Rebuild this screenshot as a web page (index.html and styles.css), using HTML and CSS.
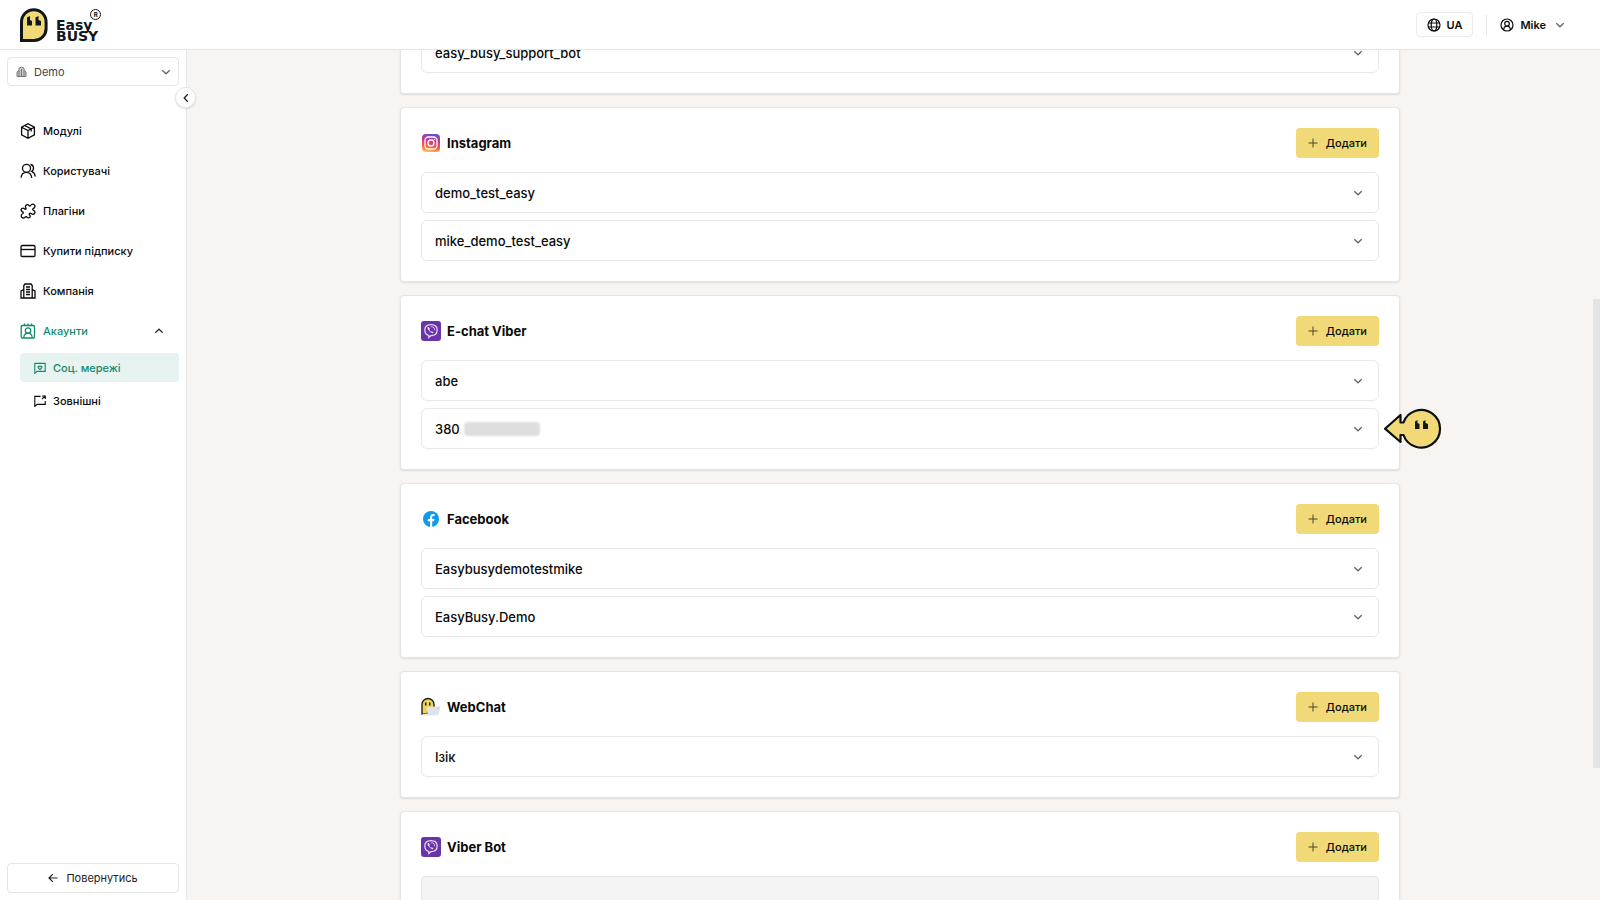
FILE: index.html
```html
<!DOCTYPE html>
<html lang="uk">
<head>
<meta charset="utf-8">
<title>Easy BUSY</title>
<link rel="stylesheet" href="styles.css">
</head>
<body>
<svg class="defs" aria-hidden="true">
  <symbol id="chevron" viewBox="0 0 10 10"><path d="M1.3 3.2 5 6.8 8.7 3.2" fill="none" stroke="currentColor" stroke-width="1.3"/></symbol>
  <symbol id="plus" viewBox="0 0 10 10"><path d="M5 .5v9M.5 5h9" fill="none" stroke="currentColor" stroke-width="1"/></symbol>
  <symbol id="viber" viewBox="0 0 20 20">
    <rect width="20" height="20" rx="3" fill="#6a34a8"/>
    <path d="M10 3.6c4 0 6.200 1 6.200 5.400s-2 5.600-6.200 5.600l-2.200 2v-2.200C5 13.800 3.800 12.400 3.800 9 3.800 4.600 6 3.600 10 3.600Z" fill="none" stroke="#eadcf8" stroke-width="1.200"/>
    <path d="M7 6c-.8.600-.4 1.900.4 3.100.9 1.400 2 2.400 3.400 3 .9.300 1.500-.3 1.600-.9l-1.500-1-.8.600C9.200 10.300 8.700 9.700 8.300 8.700l.7-.7-1-1.700c-.2-.3-.6-.5-1-.3Z" fill="#eadcf8"/>
    <path d="M10.200 5.700c2.200 0 3.500 1.300 3.500 3.500" fill="none" stroke="#eadcf8" stroke-width=".9"/>
  </symbol>
</svg>

<header class="topbar">
  <a class="logo" href="#" aria-label="Easy BUSY">
    <svg class="logo-mark" viewBox="0 0 28 34"><path d="M1.500 32.500V14a12.300 12.300 0 0 1 24.600 0v6.500a12 12 0 0 1-12 12Z" fill="#f0d976" stroke="#11181b" stroke-width="3"/><path d="M7 9.500 10 8v4l2 1v4.500H7ZM15.500 9.500l3-1.500v4l2.500 1v4.500h-5.500Z" fill="#11181b"/></svg>
    <span class="logo-text"><span>Easy</span><span>BUSY</span></span>
    <span class="logo-reg">R</span>
  </a>
  <div class="topbar-tools">
    <button class="lang" type="button">
      <svg class="icon-sm" viewBox="0 0 14 14" fill="none" stroke="currentColor" stroke-width="1.200"><circle cx="7" cy="7" r="6"/><ellipse cx="7" cy="7" rx="2.800" ry="6"/><path d="M1.500 5h11M1.500 9h11"/></svg>
      UA
    </button>
    <button class="user" type="button">
      <svg class="icon-sm" viewBox="0 0 14 14" fill="none" stroke="currentColor" stroke-width="1.200"><circle cx="7" cy="7" r="6"/><circle cx="7" cy="5.700" r="2.300"/><path d="M3.600 11.800c.2-2.500 1.200-3.700 3.400-3.700s3.200 1.200 3.400 3.700"/></svg>
      Mike
      <svg class="chev"><use href="#chevron"/></svg>
    </button>
  </div>
</header>

<div class="body">
  <aside class="sidebar">
    <div class="company">
      <svg class="company-icon" viewBox="0 0 11 12"><path d="M3 10.500V2.200L5.500 1 8 2.200v8.300ZM3 4.500 1 6v4.500h2M8 4.500 10 6v4.500H8M5.500 3v7" fill="#ccc" stroke="#777" stroke-width="1"/></svg>
      <select class="company-select" aria-label="Компанія"><option>Demo</option></select>
      <svg class="chev company-chev"><use href="#chevron"/></svg>
    </div>
    <button class="collapse" type="button" aria-label="Згорнути"><svg class="chev turn-left"><use href="#chevron"/></svg></button>

    <nav class="nav">
      <a class="nav-item" href="#"><svg class="icon" viewBox="0 0 16 16"><path d="m8 .8 6.400 3.400v7.600L8 15.200l-6.400-3.400V4.200ZM1.600 4.200 8 7.600l6.400-3.400M8 7.600v7.600M4.800 2.500l6.400 3.400v2.600"/></svg>Модулі</a>
      <a class="nav-item" href="#"><svg class="icon" viewBox="0 0 16 16"><circle cx="6.500" cy="5.300" r="4"/><path d="M1 14.800c.3-3.600 2.200-5.500 5.500-5.500s4.800 1.900 5.300 5.500M10.500 1.500c3.500.3 4 5.300 1.200 6.800 2.200 1 3.300 2.700 3.500 5.200"/></svg>Користувачі</a>
      <a class="nav-item" href="#"><svg class="icon" viewBox="0 0 16 16"><path d="M5.500 4.200C5 2 7.600.8 8.900 2.400 9.500 3.300 10.300 3.200 10.800 2.300 11.700.6 14 .8 14.700 2.200 15.300 3.600 14.600 5 13.300 5.500 12.500 6 12.600 6.900 13.400 7.300 15.800 8.300 15.300 11.300 12.800 11.400 11.600 11.500 10.900 9.800 9.800 10.300 8.800 10.800 9.300 11.800 10 12.500 10.900 14.300 8.800 15.600 7.300 14.500 6.500 13.500 5.700 13.400 5 14.300 3.600 15.600 1.500 15 1.200 13.200 1.100 11.600 2 10.900 2.900 10.500 3.600 9.900 3.300 9.300 2.600 8.800.3 7.800.8 5.300 2.800 5.100 4.200 5 4.700 6.700 5.800 6.200 6.600 5.700 5.900 5 5.500 4.200Z"/></svg>Плагіни</a>
      <a class="nav-item" href="#"><svg class="icon" viewBox="0 0 16 16"><rect x="1" y="2.500" width="14" height="11" rx="1.200"/><path d="M1 6.500h14"/></svg>Купити підписку</a>
      <a class="nav-item" href="#"><svg class="icon" viewBox="0 0 16 16"><path d="M3.800 15V2.500L5 1h6l1.200 1.500V15M3.800 6.500 1 8v7h14V8l-2.800-1.500M6 4h4M6 6.500h4M6 9h4M6 11.500h4"/></svg>Компанія</a>
      <a class="nav-item active" href="#"><svg class="icon" viewBox="0 0 16 16"><rect x="1.200" y="2.500" width="13.300" height="12.500" rx="1"/><path d="M4.500.5v2M8 .5v2M11.500.5v2"/><circle cx="8" cy="7.500" r="2.700"/><path d="M3.800 14.500c.3-3 1.700-4.300 4.200-4.300s3.900 1.300 4.200 4.300"/></svg>Акаунти<svg class="chev turn-up"><use href="#chevron"/></svg></a>
      <a class="sub-item current" href="#"><svg class="icon-xs" viewBox="0 0 12 12"><path d="M.8 11.400V1.400h10.400v8H3Z"/><path d="M6 7.600 4.200 5.700c-.7-1.300 1-2.200 1.800-1 .8-1.200 2.500-.3 1.800 1Z"/></svg>Соц. мережі</a>
      <a class="sub-item" href="#"><svg class="icon-xs" viewBox="0 0 12 12"><path d="M6.500 1.400H.8v10L3 9.400h8.200V6M8 1h3.300v3M11 1.200 8 4.200"/></svg>Зовнішні</a>
    </nav>

    <button class="back" type="button"><svg class="arrow" viewBox="0 0 10 10" fill="none" stroke="currentColor" stroke-width="1.200"><path d="M9.500 5H1M4.800 1.200 1 5l3.800 3.800"/></svg>Повернутись</button>
  </aside>

  <main class="content">
    <div class="cards">
      <section class="card card-clipped">
        <ul class="rows">
          <li><button class="row" type="button">easy_busy_support_bot<svg class="chev"><use href="#chevron"/></svg></button></li>
        </ul>
      </section>

      <section class="card">
        <div class="card-head">
          <svg class="brand" viewBox="0 0 20 20">
            <defs><linearGradient id="ig" x1=".3" y1="1" x2=".5" y2="0"><stop offset="0" stop-color="#ffc24a"/><stop offset=".3" stop-color="#f9623e"/><stop offset=".65" stop-color="#d6308e"/><stop offset="1" stop-color="#6a4fd4"/></linearGradient></defs>
            <rect x="1" y="1" width="18" height="18" rx="4" fill="url(#ig)"/><rect x="4" y="4" width="12" height="12" rx="3.500" fill="none" stroke="#fff" stroke-width="1.300"/><circle cx="10" cy="10" r="3" fill="none" stroke="#fff" stroke-width="1.300"/><circle cx="13.500" cy="6.500" r=".8" fill="#fff"/></svg>
          <h2>Instagram</h2>
          <button class="add" type="button"><svg class="plus"><use href="#plus"/></svg>Додати</button>
        </div>
        <ul class="rows">
          <li><button class="row" type="button">demo_test_easy<svg class="chev"><use href="#chevron"/></svg></button></li>
          <li><button class="row" type="button">mike_demo_test_easy<svg class="chev"><use href="#chevron"/></svg></button></li>
        </ul>
      </section>

      <section class="card">
        <div class="card-head">
          <svg class="brand"><use href="#viber"/></svg>
          <h2>E-chat Viber</h2>
          <button class="add" type="button"><svg class="plus"><use href="#plus"/></svg>Додати</button>
        </div>
        <ul class="rows">
          <li><button class="row" type="button">abe<svg class="chev"><use href="#chevron"/></svg></button></li>
          <li class="pointed"><button class="row" type="button">380<span class="redacted"></span><svg class="chev"><use href="#chevron"/></svg></button>
            <svg class="pointer" viewBox="0 0 58 42"><path d="M1 20.700 16.500 7v7.500h3a18.800 18.800 0 1 1 0 12.500h-3v7Z" fill="#f0d976" stroke="#0b0f10" stroke-width="2.200" stroke-linejoin="round"/><path d="M31 13.500 33.500 12v3l2 1v5H31ZM39 13.500l2.500-1.500v3l2.500 1v5h-5Z" fill="#11181b"/></svg>
          </li>
        </ul>
      </section>

      <section class="card">
        <div class="card-head">
          <svg class="brand" viewBox="0 0 20 20"><circle cx="10" cy="10" r="8" fill="#0c9bec"/><path d="M9 18v-5.700H6.800V10H9V8.300C9 6 10.200 4.900 12.200 4.900l1.400.1v2h-1c-1 0-1.400.5-1.400 1.300V10h2.300l-.4 2.300h-1.900V18Z" fill="#fff"/></svg>
          <h2>Facebook</h2>
          <button class="add" type="button"><svg class="plus"><use href="#plus"/></svg>Додати</button>
        </div>
        <ul class="rows">
          <li><button class="row" type="button">Easybusydemotestmike<svg class="chev"><use href="#chevron"/></svg></button></li>
          <li><button class="row" type="button">EasyBusy.Demo<svg class="chev"><use href="#chevron"/></svg></button></li>
        </ul>
      </section>

      <section class="card">
        <div class="card-head">
          <svg class="brand" viewBox="0 0 20 20"><path d="M1 17V7.500a6 6 0 0 1 12 0V17Z" fill="#f0d35c" stroke="#1d2224" stroke-width="1.400"/><path d="M4 5.500h1.500v3H4ZM8 5.500h1.500v3H8Z" fill="#1d2224"/><path d="m5.500 10 14-.8-2 9H2l-.8-1.500h5.500Z" fill="#dfe3ee"/><circle cx="6" cy="15.500" r="1" fill="#c9b45c"/><circle cx="17" cy="11.200" r=".8" fill="#d9c45c"/></svg>
          <h2>WebChat</h2>
          <button class="add" type="button"><svg class="plus"><use href="#plus"/></svg>Додати</button>
        </div>
        <ul class="rows">
          <li><button class="row" type="button">Ізік<svg class="chev"><use href="#chevron"/></svg></button></li>
        </ul>
      </section>

      <section class="card">
        <div class="card-head">
          <svg class="brand"><use href="#viber"/></svg>
          <h2>Viber Bot</h2>
          <button class="add" type="button"><svg class="plus"><use href="#plus"/></svg>Додати</button>
        </div>
        <div class="empty"></div>
      </section>
    </div>
    <div class="scroll-thumb"></div>
  </main>
</div>
</body>
</html>
```

FILE: styles.css
```css
* { box-sizing: border-box; }

body {
  margin: 0;
  height: 100vh;
  display: flex;
  flex-direction: column;
  overflow: hidden;
  font-family: Inter, "Noto Sans", sans-serif;
  font-size: 11px;
  font-weight: 500;
  color: #0a0a0a;
  background: #fff;
}

button, select { font: inherit; color: inherit; background: #fff; cursor: pointer; }
a { color: inherit; text-decoration: none; }
svg { display: block; flex: none; }
.defs { position: absolute; width: 0; height: 0; }
.chev { width: 10px; height: 10px; color: #666; }
.turn-up { transform: rotate(180deg); margin-left: auto; color: #333; }
.turn-left { transform: rotate(90deg); color: #222; }

/* Top bar */
.topbar {
  flex: none;
  display: flex;
  align-items: center;
  justify-content: space-between;
  height: 50px;
  padding: 0 35px 0 20px;
  border-bottom: 1px solid #e2e3e5;
}
.logo { display: flex; align-items: center; }
.logo-mark { width: 28px; height: 34px; }
.logo-text {
  display: flex;
  flex-direction: column;
  margin: 13px 0 0 8px;
  font-family: "DejaVu Sans", sans-serif;
  font-size: 14px;
  font-weight: 700;
  line-height: 11px;
  color: #11181b;
}
.logo-reg {
  align-self: flex-start;
  width: 11px;
  height: 11px;
  margin: 2px 0 0 -8px;
  border: 1px solid #11181b;
  border-radius: 50%;
  font-size: 6px;
  font-weight: 700;
  line-height: 9px;
  text-align: center;
}
.topbar-tools { display: flex; align-items: center; gap: 13px; font-weight: 600; }
.icon-sm { width: 14px; height: 14px; }
.lang, .user { display: flex; align-items: center; gap: 6px; border: 0; }
.lang { height: 25px; padding: 0 10px; border: 1px solid #ebebeb; border-radius: 4px; }
.user { height: 20px; padding: 0 0 0 13px; border-left: 1px solid #e5e5e5; }
.user .chev { margin-left: 3px; }

/* Sidebar */
.body { flex: 1; display: flex; min-height: 0; }
.sidebar {
  position: relative;
  flex: none;
  display: flex;
  flex-direction: column;
  width: 187px;
  padding: 7px 7px 7px;
  border-right: 1px solid #e4e5ea;
}
.company { position: relative; }
.company-select {
  appearance: none;
  display: block;
  width: 100%;
  height: 29px;
  padding: 0 26px;
  border: 1px solid #e6e6e6;
  border-radius: 4px;
  font-weight: 400;
  color: #444;
}
.company-icon { position: absolute; left: 9px; top: 9px; width: 11px; height: 12px; }
.company-chev { position: absolute; right: 8px; top: 10px; }
.collapse {
  position: absolute;
  right: -10px;
  top: 37px;
  z-index: 1;
  display: grid;
  place-items: center;
  width: 21px;
  height: 21px;
  padding: 0;
  border: 1px solid #e6e6e6;
  border-radius: 50%;
  box-shadow: 0 1px 2px rgba(0, 0, 0, .12);
}
.nav { display: flex; flex-direction: column; margin-top: 25px; }
.nav-item {
  display: flex;
  align-items: center;
  gap: 7px;
  height: 40px;
  padding: 0 15px 0 13px;
}
.icon, .icon-xs { fill: none; stroke: currentColor; stroke-width: 1.3; }
.icon { width: 16px; height: 16px; }
.icon-xs { width: 12px; height: 12px; stroke-width: 1.1; }
.active, .current { color: #138a6c; }
.sub-item {
  display: flex;
  align-items: center;
  gap: 7px;
  height: 29px;
  margin: 2px 0 2px 13px;
  padding: 0 14px;
  border-radius: 4px;
}
.current { background: #e7f3f0; }
.back {
  display: flex;
  align-items: center;
  justify-content: center;
  gap: 8px;
  height: 30px;
  margin-top: auto;
  border: 1px solid #e6e6e6;
  border-radius: 4px;
  font-weight: 400;
  color: #222;
}

/* Account cards */
.content {
  position: relative;
  flex: 1;
  padding-left: 13px;
  overflow: hidden;
  background: #f8f4f1;
}
.cards {
  display: flex;
  flex-direction: column;
  gap: 13px;
  max-width: 1000px;
  margin: -19px auto 0;
}
.card {
  padding: 20px;
  border: 1px solid #e6e5e4;
  border-radius: 4px;
  background: #fff;
  box-shadow: 0 1px 2px rgba(0, 0, 0, .1);
}
.card-clipped { padding-top: 0; }
.card-head { display: flex; align-items: center; gap: 6px; height: 30px; margin-bottom: 14px; }
.brand { width: 20px; height: 20px; }
h2 { margin: 0; font-size: 13px; font-weight: 700; }
.add {
  display: flex;
  align-items: center;
  gap: 8px;
  height: 30px;
  margin-left: auto;
  padding: 0 12px;
  border: 0;
  border-radius: 4px;
  background: #f0d976;
}
.plus, .arrow { width: 10px; height: 10px; }
.plus { color: #4a4530; }
.rows { display: flex; flex-direction: column; gap: 7px; margin: 0; padding: 0; list-style: none; }
.row {
  display: flex;
  align-items: center;
  width: 100%;
  height: 41px;
  padding: 0 15px 0 13px;
  border: 1px solid #e8e8e8;
  border-radius: 6px;
  font-size: 13px;
}
.row .chev { margin-left: auto; }
.redacted { width: 76px; height: 14px; margin-left: 4px; border-radius: 4px; background: #dedede; filter: blur(1px); }
.pointed { position: relative; }
.pointer { position: absolute; left: calc(100% + 5px); top: 0; width: 58px; height: 42px; }
.empty { height: 60px; border: 1px solid #e6e6e6; border-radius: 4px; background: #f4f4f4; }
.scroll-thumb { position: absolute; right: 0; top: 249px; width: 7px; height: 469px; background: #e4e4e4; }
```
